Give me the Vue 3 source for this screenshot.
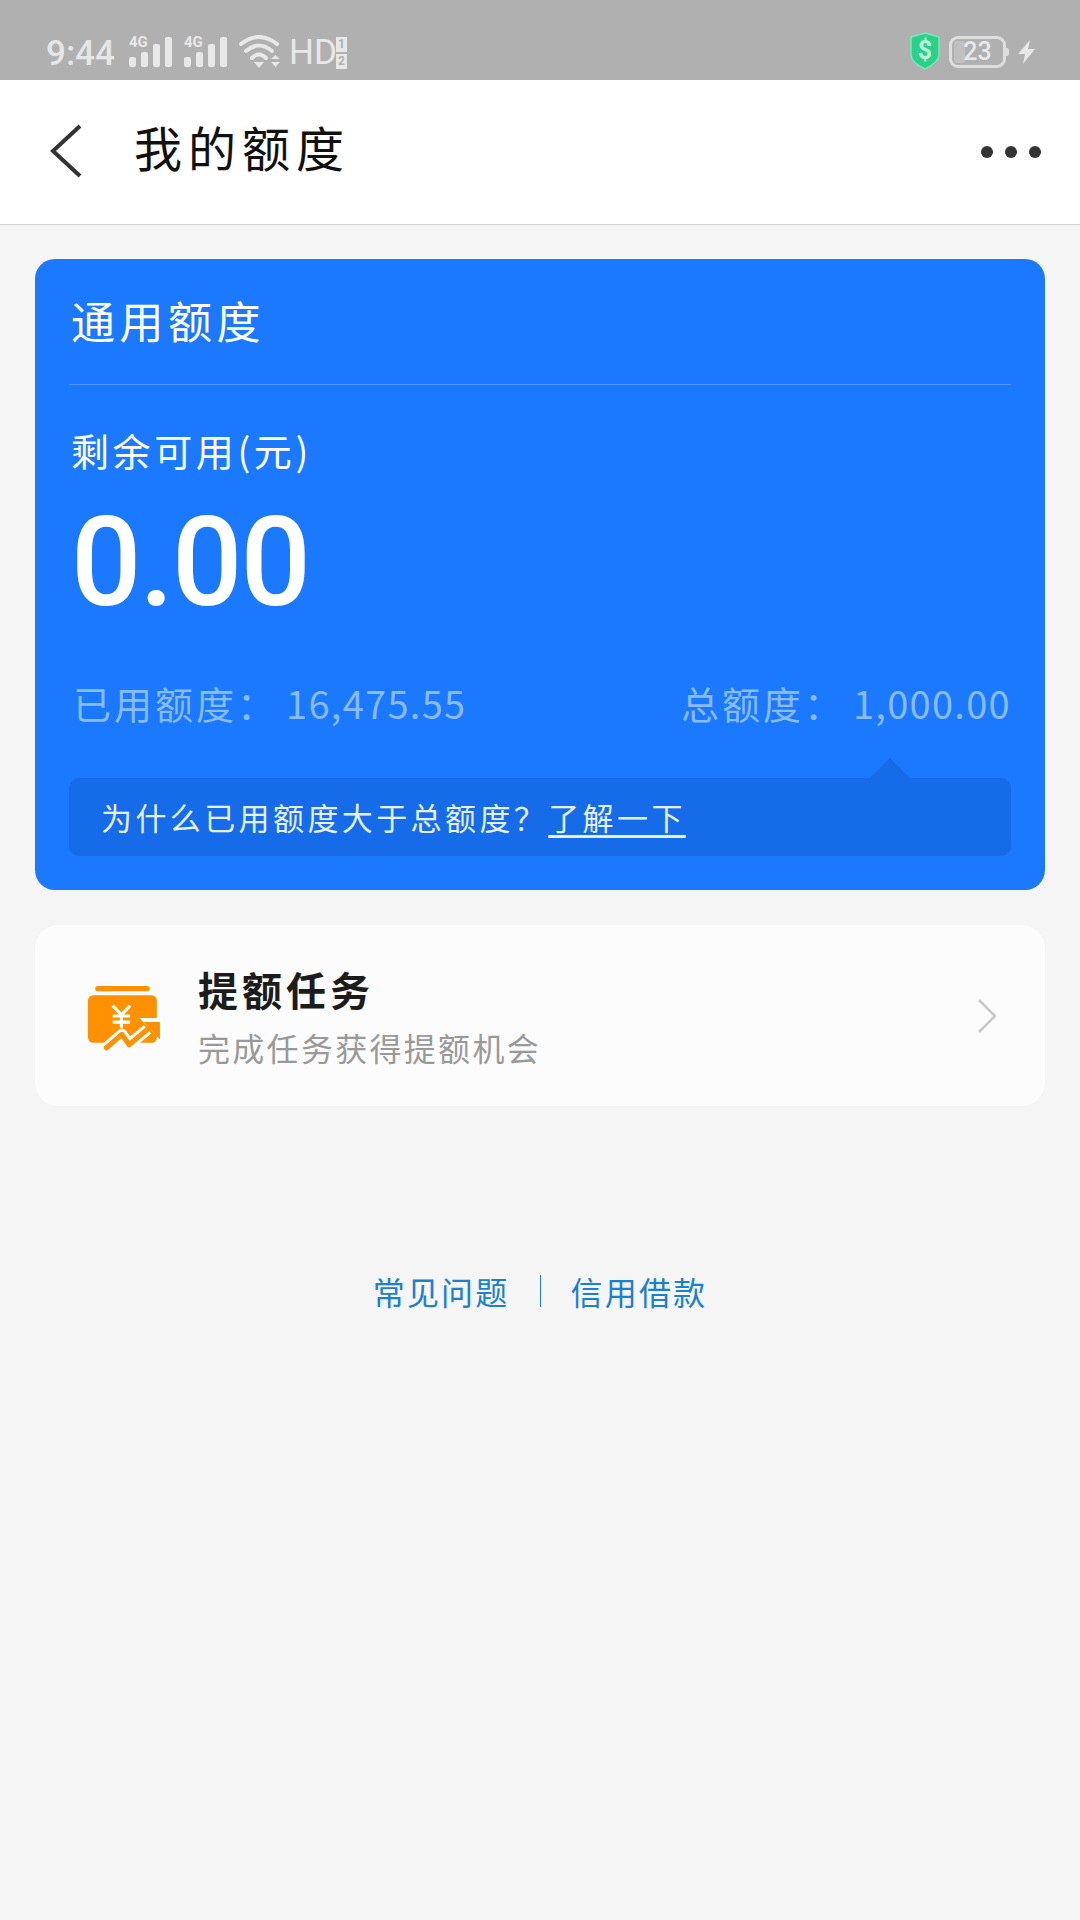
<script setup>
const bars = [
  { h: 10 },
  { h: 15 },
  { h: 23 },
  { h: 30 }
]
</script>

<template>
  <div class="page">
    <div class="status">
      <div class="status-left">
        <span class="time">9:44</span>
        <div v-for="n in 2" :key="n" class="signal">
          <span class="net">4G</span>
          <i v-for="(b, i) in bars" :key="i" class="bar" :style="{ height: b.h + 'px' }"></i>
        </div>
        <svg class="wifi" width="42" height="34" viewBox="0 0 42 34">
          <path d="M2 9 Q20 -5 38 9" fill="none" stroke="#e8e8e8" stroke-width="4" stroke-linecap="round"/>
          <path d="M7 16 Q20 5 33 16" fill="none" stroke="#e8e8e8" stroke-width="4" stroke-linecap="round"/>
          <path d="M13 23 Q20 16 27 23" fill="none" stroke="#e8e8e8" stroke-width="4" stroke-linecap="round"/>
          <path d="M15 27 H25 L20 33 Z" fill="#e8e8e8"/>
          <path d="M32 24 L36.500 20 L41 24 Z M32 27 H41 L36.500 32 Z" fill="#e8e8e8"/>
        </svg>
        <span class="hd">HD</span>
        <div class="sim"><span>1</span><span>2</span></div>
      </div>
      <div class="status-right">
        <svg class="shield" width="30" height="38" viewBox="0 0 30 38">
          <path d="M15 1 L29 5 V23 Q29 30 15 37 Q1 30 1 23 V5 Z" fill="#2bd18a" stroke="#7be8b8" stroke-width="1.500"/>
          <text x="15" y="27" text-anchor="middle" class="dollar">$</text>
        </svg>
        <div class="battery"><i class="charge"></i><span>23</span></div>
        <i class="nub"></i>
        <svg class="bolt" width="17" height="24" viewBox="0 0 17 24">
          <path d="M12 0 L0 14 H7 L5 24 L17 9 H10 Z" fill="#e8e8e8"/>
        </svg>
      </div>
    </div>

    <header class="nav">
      <div class="nav-left">
        <svg width="32" height="54" viewBox="0 0 32 54">
          <path d="M30 2 L3 27 L30 52" fill="none" stroke="#333" stroke-width="4"/>
        </svg>
        <h1>我的额度</h1>
      </div>
      <div class="dots"><i></i><i></i><i></i></div>
    </header>

    <main class="content">
      <section class="quota">
        <h2>通用额度</h2>
        <div class="quota-body">
          <p class="label">剩余可用(元)</p>
          <p class="amount">0.00</p>
          <div class="totals">
            <span><span class="key">已用额度：</span><span class="val">16,475.55</span></span>
            <span><span class="key">总额度：</span><span class="val">1,000.00</span></span>
          </div>
          <div class="tip">
            <i class="arrow"></i>
            为什么已用额度大于总额度？<a>了解一下</a>
          </div>
        </div>
      </section>

      <section class="task">
        <svg class="task-icon" width="74" height="66" viewBox="0 0 72 64">
          <rect x="7" y="0" width="53" height="5" rx="2.500" fill="#ff9000"/>
          <rect x="0" y="9" width="67" height="46" rx="5" fill="#ff9000"/>
          <path d="M24 19 L32.500 28 L41 19 M32.500 28 V41 M24 29 H41 M24 35 H41" fill="none" stroke="#fff" stroke-width="3"/>
          <path d="M18 60 L33 47 L40 57 L58 42" fill="none" stroke="#fff" stroke-width="11" stroke-linejoin="round"/>
          <path d="M50 31 H72 V54 Z" fill="#fff"/>
          <path d="M18 60 L33 47 L40 57 L58 42" fill="none" stroke="#ff9000" stroke-width="5" stroke-linecap="round" stroke-linejoin="round"/>
          <path d="M54 35 H70 V52 Z" fill="#ff9000"/>
        </svg>
        <div class="task-text">
          <h3>提额任务</h3>
          <p>完成任务获得提额机会</p>
        </div>
        <svg class="chevron" width="20" height="36" viewBox="0 0 20 36">
          <path d="M2 2 L18 18 L2 34" fill="none" stroke="#c8c8c8" stroke-width="2.500"/>
        </svg>
      </section>

      <nav class="links">
        <a>常见问题</a>
        <i></i>
        <a>信用借款</a>
      </nav>
    </main>
  </div>
</template>

<style>
html, body { margin: 0; background: #f5f5f5; }
</style>

<style scoped>
.page {
  width: 1080px;
  height: 1920px;
  background: #f5f5f5;
  font-family: "Noto Sans CJK SC", "Noto Sans", sans-serif;
  overflow: hidden;
}
h1, h2, h3, p { margin: 0; font-weight: 400; }
i { display: block; font-style: normal; }

.status {
  height: 80px;
  background: #b0b0b0;
  color: #e8e8e8;
  display: flex;
  justify-content: space-between;
  align-items: flex-end;
  padding: 0 45px 13px 46px;
  box-sizing: border-box;
}
.status-left, .status-right { display: flex; align-items: flex-end; }
.time {
  font: 500 35px/30px Roboto, sans-serif;
  width: 68px;
  margin-right: 15px;
  margin-bottom: -2px;
  color: #e6e6e6;
}
.signal {
  position: relative;
  display: flex;
  align-items: flex-end;
  gap: 5px;
  width: 43px;
  margin-right: 12px;
}
.net {
  position: absolute;
  left: 0;
  top: -1px;
  font: 700 15px/13px Roboto, sans-serif;
}
.bar { width: 7px; border-radius: 2px; background: #e8e8e8; }
.wifi { margin-bottom: -2px; }
.hd { font: 400 35px/30px Roboto, sans-serif; margin-left: 8px; margin-bottom: -1px; width: 47px; }
.sim { display: flex; flex-direction: column; gap: 2px; margin-bottom: -2px; }
.sim span {
  width: 11px;
  height: 15px;
  background: #e8e8e8;
  color: #b0b0b0;
  font: 700 12px/15px Roboto, sans-serif;
  text-align: center;
}
.shield { margin-right: 9px; margin-bottom: -3px; }
.dollar { font: 700 25px Roboto, sans-serif; fill: #c0f5da; }
.battery {
  position: relative;
  width: 57px;
  height: 32px;
  box-sizing: border-box;
  border: 3px solid #dedede;
  border-radius: 9px;
  text-align: center;
  font: 500 25px/26px Roboto, sans-serif;
  color: #e8e8e8;
  overflow: hidden;
  margin-bottom: -1px;
}
.battery span { position: relative; }
.charge { position: absolute; left: 2px; top: 2px; bottom: 2px; width: 11px; background: #c0c0c0; border-radius: 3px; }
.nub { width: 3px; height: 8px; background: #dedede; margin: 0 9px 11px 0; border-radius: 0 2px 2px 0; }
.bolt { margin-bottom: 3px; }

.nav {
  height: 145px;
  box-sizing: border-box;
  background: #fff;
  border-bottom: 1px solid #d4d4d4;
  display: flex;
  justify-content: space-between;
  align-items: center;
  padding: 0 39px 0 50px;
}
.nav-left { display: flex; align-items: center; gap: 52px; }
.nav-left svg { margin-bottom: 2px; }
h1 { font-size: 48px; line-height: 60px; letter-spacing: 6px; color: #111; margin-bottom: 12px; }
.dots { display: flex; gap: 12px; }
.dots i { width: 12px; height: 12px; border-radius: 50%; background: #333; }

.content { padding: 34px 35px 0; }
.quota {
  height: 631px;
  box-sizing: border-box;
  background: #1a79ff;
  border-radius: 20px;
  padding: 0 34px;
  color: #fff;
}
h2 {
  height: 126px;
  box-sizing: border-box;
  padding: 30px 2px 0;
  font-size: 44px;
  line-height: 62px;
  letter-spacing: 4.500px;
  border-bottom: 1px solid #4d97ff;
}
.quota-body { padding-top: 39px; }
.label { font-size: 38px; line-height: 52px; padding-left: 2px; letter-spacing: 3.600px; }
.amount {
  font: 500 124px/130px Roboto, sans-serif;
  letter-spacing: -2px;
  padding-left: 2px;
  margin-top: 22px;
}
.totals {
  display: flex;
  justify-content: space-between;
  color: #88bbff;
  font-size: 38px;
  line-height: 50px;
  margin-top: 50px;
  padding-left: 4px;
}
.key { letter-spacing: 3px; margin-right: 8px; }
.val { letter-spacing: 1.300px; }
.tip {
  position: relative;
  height: 78px;
  margin-top: 50px;
  background: #166be8;
  border-radius: 10px;
  padding-left: 32px;
  font-size: 31px;
  line-height: 78px;
  letter-spacing: 3.400px;
  color: #e4efff;
}
.tip a { text-decoration: underline; text-underline-offset: 5px; }
.arrow {
  position: absolute;
  top: -20px;
  right: 101px;
  width: 0;
  height: 0;
  border-left: 20px solid transparent;
  border-right: 20px solid transparent;
  border-bottom: 20px solid #166be8;
}

.task {
  height: 181px;
  margin-top: 35px;
  background: #fcfcfc;
  border-radius: 24px;
  display: flex;
  align-items: center;
  padding: 0 48px 0 53px;
}
.task-icon { margin-right: 36px; margin-top: 7px; flex: none; }
.task-text { flex: 1; }
h3 { font-size: 40px; line-height: 54px; font-weight: 700; letter-spacing: 4px; color: #1c1c1c; }
.task-text p { font-size: 32px; line-height: 46px; letter-spacing: 2.300px; color: #999; margin-top: 8px; }

.links {
  display: flex;
  align-items: center;
  justify-content: center;
  gap: 30px;
  margin-top: 163px;
  color: #1a80d0;
  font-size: 32px;
  line-height: 44px;
  letter-spacing: 2.200px;
}
.links i { width: 1px; height: 32px; background: #1a80d0; }
</style>
